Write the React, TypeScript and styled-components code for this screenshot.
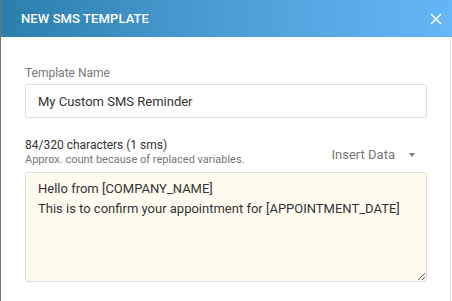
import styled, { createGlobalStyle } from "styled-components";

const Global = createGlobalStyle`
  html, body {
    margin: 0;
    padding: 0;
    background: #fff;
    font-family: Roboto, "Liberation Sans", Arial, sans-serif;
  }
`;

export default function App() {
  return (
    <>
      <Global />
      <Dialog>
        <Header>
          <Title>NEW SMS TEMPLATE</Title>
          <CloseButton aria-label="Close">
            <svg viewBox="0 0 12 12" width="12" height="12">
              <path d="M1 1 L11 11 M11 1 L1 11" stroke="#fff" strokeWidth="1.6" />
            </svg>
          </CloseButton>
        </Header>

        <Body>
          <Field>
            <Label>Template Name</Label>
            <TextInput defaultValue="My Custom SMS Reminder" />
          </Field>

          <MessageMeta>
            <Counts>
              <CountLine>84/320 characters (1 sms)</CountLine>
              <Hint>Approx. count because of replaced variables.</Hint>
            </Counts>
            <InsertData>
              Insert Data
              <Caret />
            </InsertData>
          </MessageMeta>

          <MessageBox
            defaultValue={
              "Hello from [COMPANY_NAME]\nThis is to confirm your appointment for [APPOINTMENT_DATE]"
            }
          />
        </Body>
      </Dialog>
    </>
  );
}

const Dialog = styled.div`
  width: 452px;
  height: 301px;
  box-sizing: border-box;
  border-left: 1px solid #737373;
  display: flex;
  flex-direction: column;
  overflow: hidden;
`;

const Header = styled.div`
  height: 37px;
  flex-shrink: 0;
  display: flex;
  align-items: center;
  justify-content: space-between;
  padding: 0 10px 0 20px;
  background: linear-gradient(90deg, #2a7fad 0%, #4a9ad2 45%, #65b6f7 100%);
`;

const Title = styled.div`
  color: #fff;
  font-size: 13px;
  font-weight: 500;
  letter-spacing: 0.1px;
`;

const CloseButton = styled.button`
  border: 0;
  background: transparent;
  padding: 0;
  width: 12px;
  height: 12px;
  display: flex;
  cursor: pointer;
`;

const Body = styled.div`
  flex: 1;
  margin-right: 1px;
  border-right: 1px solid #e2e2e2;
  padding: 28px 23px 0 24px;
  display: flex;
  flex-direction: column;
`;

const Field = styled.div`
  display: flex;
  flex-direction: column;
  gap: 3px;
`;

const Label = styled.label`
  font-size: 12px;
  line-height: 16px;
  color: #777;
`;

const TextInput = styled.input`
  height: 34px;
  box-sizing: border-box;
  border: 1px solid #ddd;
  border-radius: 3px;
  padding: 0 12px;
  font-family: inherit;
  font-size: 13px;
  color: #333;
  outline: none;
`;

const MessageMeta = styled.div`
  display: flex;
  justify-content: space-between;
  align-items: center;
  margin-top: 19px;
  margin-bottom: 5px;
`;

const Counts = styled.div`
  display: flex;
  flex-direction: column;
`;

const CountLine = styled.div`
  font-size: 12px;
  line-height: 16px;
  color: #333;
`;

const Hint = styled.div`
  font-size: 11px;
  line-height: 14px;
  color: #777;
`;

const InsertData = styled.div`
  display: flex;
  align-items: center;
  gap: 14px;
  padding-right: 12px;
  margin-top: 5px;
  font-size: 13px;
  color: #777;
  cursor: pointer;
`;

const Caret = styled.span`
  width: 0;
  height: 0;
  border-left: 3.5px solid transparent;
  border-right: 3.5px solid transparent;
  border-top: 4px solid #777;
`;

const MessageBox = styled.textarea`
  height: 110px;
  box-sizing: border-box;
  border: 1px solid #ddd;
  border-radius: 3px;
  background: #fffcef;
  padding: 6px 12px;
  font-family: inherit;
  font-size: 13px;
  line-height: 20px;
  color: #333;
  resize: vertical;
  outline: none;
`;
